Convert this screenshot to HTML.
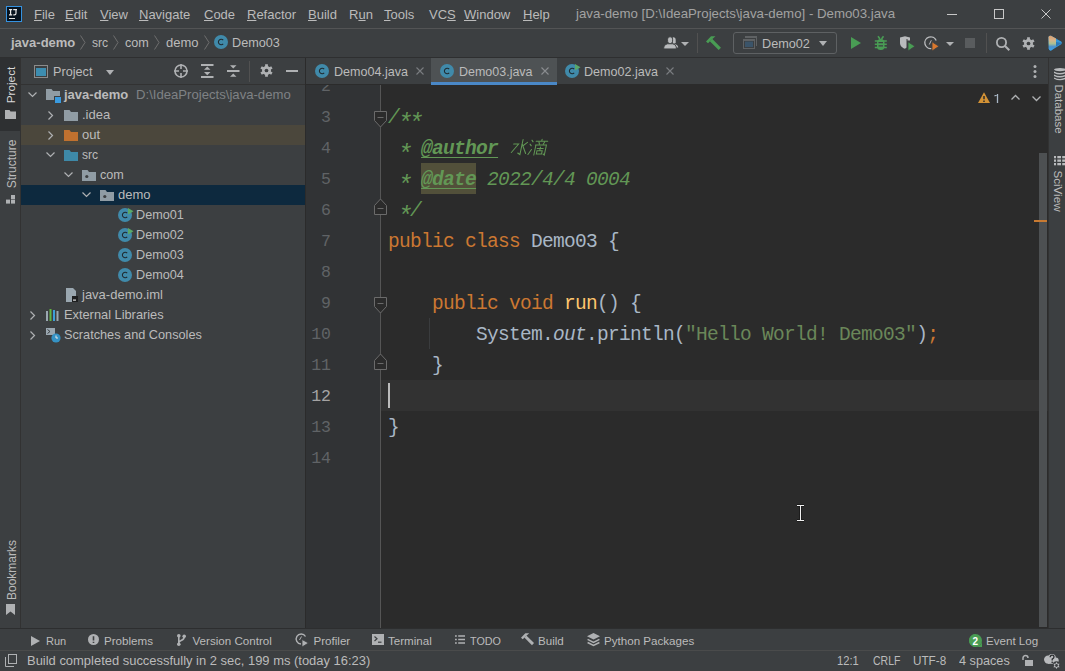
<!DOCTYPE html>
<html><head><meta charset="utf-8">
<style>
*{margin:0;padding:0;box-sizing:border-box}
html,body{width:1065px;height:671px;overflow:hidden;background:#3C3F41}
body{position:relative;font-family:"Liberation Sans",sans-serif;font-size:13px;color:#BBBBBB}
.a{position:absolute}
.t{position:absolute;white-space:nowrap}
svg{position:absolute;overflow:visible}
.code{position:absolute;left:388px;font-family:"Liberation Mono",monospace;font-size:19.5px;letter-spacing:-0.7px;white-space:pre;line-height:31px;height:31px}
.ast{display:inline-block;transform:translateY(6.5px) scale(1.3)}.kw{color:#CC7832}.df{color:#A9B7C6}.doc{color:#629755;font-style:italic}.str{color:#6A8759}.fn{color:#FFC66D}.st{color:#A9B7C6;font-style:italic}
.ln{position:absolute;font-family:"Liberation Mono",monospace;font-size:16.5px;line-height:31px;height:31px;color:#606366;text-align:right;width:60px;left:271px}
</style></head><body>
<div class="a" style="left:0px;top:0px;width:1065px;height:28px;background:#3C3F41;"></div>
<div class="a" style="left:0px;top:28px;width:1065px;height:1px;background:#535455;"></div>
<div class="a" style="left:6px;top:6px;width:16px;height:16px;background:#07131F;border:1px solid #3592E0;"></div>
<svg style="left:0px;top:0px;" width="28" height="28" viewBox="0 0 28 28"><path d="M9 9.6H12.2M10.6 9.6V14.8M9 14.8H12.2M13.2 9.6H17M16 9.6V13.3Q16 14.9 14.4 14.9H13.3" fill="none" stroke="#E8E8E8" stroke-width="1.2"/></svg>
<div class="a" style="left:9px;top:18px;width:6px;height:1px;background:#E0E0E0;"></div>
<div class="t" style="left:34px;top:4.5px;font-size:13px;line-height:20px;color:#BBBBBB;"><span style="text-decoration:underline;text-underline-offset:1px">F</span>ile</div>
<div class="t" style="left:65px;top:4.5px;font-size:13px;line-height:20px;color:#BBBBBB;"><span style="text-decoration:underline;text-underline-offset:1px">E</span>dit</div>
<div class="t" style="left:100px;top:4.5px;font-size:13px;line-height:20px;color:#BBBBBB;"><span style="text-decoration:underline;text-underline-offset:1px">V</span>iew</div>
<div class="t" style="left:139px;top:4.5px;font-size:13px;line-height:20px;color:#BBBBBB;"><span style="text-decoration:underline;text-underline-offset:1px">N</span>avigate</div>
<div class="t" style="left:204px;top:4.5px;font-size:13px;line-height:20px;color:#BBBBBB;"><span style="text-decoration:underline;text-underline-offset:1px">C</span>ode</div>
<div class="t" style="left:247px;top:4.5px;font-size:13px;line-height:20px;color:#BBBBBB;"><span style="text-decoration:underline;text-underline-offset:1px">R</span>efactor</div>
<div class="t" style="left:308px;top:4.5px;font-size:13px;line-height:20px;color:#BBBBBB;"><span style="text-decoration:underline;text-underline-offset:1px">B</span>uild</div>
<div class="t" style="left:349px;top:4.5px;font-size:13px;line-height:20px;color:#BBBBBB;">R<span style="text-decoration:underline;text-underline-offset:1px">u</span>n</div>
<div class="t" style="left:384px;top:4.5px;font-size:13px;line-height:20px;color:#BBBBBB;"><span style="text-decoration:underline;text-underline-offset:1px">T</span>ools</div>
<div class="t" style="left:429px;top:4.5px;font-size:13px;line-height:20px;color:#BBBBBB;">VC<span style="text-decoration:underline;text-underline-offset:1px">S</span></div>
<div class="t" style="left:464px;top:4.5px;font-size:13px;line-height:20px;color:#BBBBBB;"><span style="text-decoration:underline;text-underline-offset:1px">W</span>indow</div>
<div class="t" style="left:523px;top:4.5px;font-size:13px;line-height:20px;color:#BBBBBB;"><span style="text-decoration:underline;text-underline-offset:1px">H</span>elp</div>
<div class="t" style="left:576px;top:3.5px;font-size:13px;line-height:20px;color:#A2A2A2;transform:scaleX(1.02);transform-origin:0 0;">java-demo [D:\IdeaProjects\java-demo] - Demo03.java</div>
<div class="a" style="left:947px;top:14px;width:10px;height:1px;background:#C8C8C8;"></div>
<div class="a" style="left:994px;top:9px;width:10px;height:10px;background:transparent;border:1px solid #C8C8C8;"></div>
<svg style="left:1041px;top:9px;" width="10" height="10" viewBox="0 0 10 10"><path d="M0.5 0.5L9.5 9.5M9.5 0.5L0.5 9.5" stroke="#C8C8C8" stroke-width="1"/></svg>
<div class="a" style="left:0px;top:29px;width:1065px;height:28px;background:#3C3F41;"></div>
<div class="a" style="left:0px;top:57px;width:1065px;height:1px;background:#2E2F30;"></div>
<div class="t" style="left:11px;top:32.5px;font-size:13px;line-height:20px;color:#BBBBBB;font-weight:bold;">java-demo</div>
<svg style="left:80px;top:35px;" width="6" height="15" viewBox="0 0 6 15"><path d="M0.5 0.5L5 7.5L0.5 14.5" fill="none" stroke="#6E6E6E" stroke-width="1"/></svg>
<svg style="left:113px;top:35px;" width="6" height="15" viewBox="0 0 6 15"><path d="M0.5 0.5L5 7.5L0.5 14.5" fill="none" stroke="#6E6E6E" stroke-width="1"/></svg>
<svg style="left:154px;top:35px;" width="6" height="15" viewBox="0 0 6 15"><path d="M0.5 0.5L5 7.5L0.5 14.5" fill="none" stroke="#6E6E6E" stroke-width="1"/></svg>
<svg style="left:204px;top:35px;" width="6" height="15" viewBox="0 0 6 15"><path d="M0.5 0.5L5 7.5L0.5 14.5" fill="none" stroke="#6E6E6E" stroke-width="1"/></svg>
<div class="t" style="left:92px;top:32.5px;font-size:13px;line-height:20px;color:#BBBBBB;transform:scaleX(0.93);transform-origin:0 0;">src</div>
<div class="t" style="left:125px;top:32.5px;font-size:13px;line-height:20px;color:#BBBBBB;transform:scaleX(0.97);transform-origin:0 0;">com</div>
<div class="t" style="left:166px;top:32.5px;font-size:13px;line-height:20px;color:#BBBBBB;">demo</div>
<svg style="left:214px;top:35px;" width="14" height="14" viewBox="0 0 14 14"><circle cx="7" cy="7" r="7" fill="#408AAA"/><path d="M9.2 5.2A2.75 2.75 0 1 0 9.2 8.8" fill="none" stroke="#1F2A30" stroke-width="1.05"/></svg>
<div class="t" style="left:232px;top:32.5px;font-size:13px;line-height:20px;color:#BBBBBB;transform:scaleX(0.975);transform-origin:0 0;">Demo03</div>
<svg style="left:664px;top:37px;" width="16" height="13" viewBox="0 0 16 13"><g fill="#B9BBBD"><path d="M8.8 0.3Q11.6 0 11.7 3V5.2Q11.5 6.4 10.3 6.6L8.8 6.4Z"/><path d="M9.5 7.1Q13.2 7.2 14 9.6L14.2 10.4H12Z"/><g stroke="#3C3F41" stroke-width="0.9"><rect x="3.6" y="-0.2" width="5" height="6.8" rx="2.4"/><path d="M-0.2 11.9V10Q0.4 7.3 3.5 6.8H8.7Q11.8 7.3 12.3 10V11.9Z"/></g></g></svg>
<svg style="left:681px;top:42px;" width="8" height="4" viewBox="0 0 8 4"><path d="M0 0H8L4 4Z" fill="#AFB1B3"/></svg>
<div class="a" style="left:697px;top:33px;width:1px;height:20px;background:#515151;"></div>
<svg style="left:706px;top:36px;" width="15" height="14" viewBox="0 0 15 14"><path d="M0 5.5L5 0.2H9.5L5.5 3.8L2 7.2Z" fill="#499C54"/><path d="M5 4L13.8 12.8" stroke="#499C54" stroke-width="3.3"/></svg>
<div class="a" style="left:733px;top:32px;width:104px;height:22px;background:transparent;border:1px solid #5E6163;border-radius:3px;"></div>
<svg style="left:743px;top:36px;" width="14" height="14" viewBox="0 0 14 14"><rect x="2" y="0" width="12" height="2" fill="#5F6264"/><rect x="13" y="0" width="1" height="10" fill="#5F6264"/><rect x="0.5" y="3.5" width="11" height="9" fill="#3C3F41" stroke="#5F6264"/><rect x="0" y="3" width="12" height="2" fill="#5F6264"/><rect x="2" y="5.5" width="8" height="5.5" fill="#3B5469"/></svg>
<div class="t" style="left:762px;top:33.5px;font-size:13px;line-height:20px;color:#BBBBBB;transform:scaleX(0.975);transform-origin:0 0;">Demo02</div>
<svg style="left:819px;top:41px;" width="8" height="5" viewBox="0 0 8 5"><path d="M0 0H8L4 5Z" fill="#AFB1B3"/></svg>
<svg style="left:851px;top:37px;" width="10" height="12" viewBox="0 0 10 12"><path d="M0 0L10 6L0 12Z" fill="#499C54"/></svg>
<svg style="left:874px;top:36px;" width="14" height="14" viewBox="0 0 14 14"><rect x="3" y="3" width="7.5" height="11" rx="3.5" fill="#499C54"/><path d="M0.8 5H12.8M0.8 8.3H12.8M0.8 11.5H12.8M4 0.3L6 3M9.5 0.3L7.5 3" stroke="#499C54" stroke-width="1.6"/><path d="M4.5 6.6H9M4.5 9.9H9" stroke="#3C3F41" stroke-width="1.2"/></svg>
<svg style="left:900px;top:36px;" width="16" height="15" viewBox="0 0 16 15"><path d="M0 1.5L5 0.2L10 1.5V4.5H7.5V3H6.5V11.5L5 12.8C2.5 11.8 0 10 0 7Z" fill="#B9BBBD"/><path d="M8 5.8L15 10.3L8 15Z" fill="#499C54" stroke="#3C3F41" stroke-width="0.8"/></svg>
<svg style="left:924px;top:36px;" width="16" height="15" viewBox="0 0 16 15"><path d="M7.5 12.6A5.9 5.9 0 1 1 12.2 4.5" fill="none" stroke="#B9BBBD" stroke-width="1.3"/><path d="M5.3 8.5L7.3 4.3" stroke="#B9BBBD" stroke-width="1"/><path d="M8 5.8L15 10.3L8 15Z" fill="#D9782E" stroke="#3C3F41" stroke-width="0.8"/></svg>
<svg style="left:946px;top:42px;" width="8" height="4" viewBox="0 0 8 4"><path d="M0 0H8L4 4Z" fill="#AFB1B3"/></svg>
<div class="a" style="left:965px;top:38px;width:10px;height:10px;background:#595C5E;"></div>
<div class="a" style="left:986px;top:33px;width:1px;height:20px;background:#515151;"></div>
<svg style="left:996px;top:37px;" width="14" height="14" viewBox="0 0 14 14"><circle cx="5.5" cy="5.5" r="4.6" fill="none" stroke="#AFB1B3" stroke-width="1.8"/><path d="M9 9L13.3 13.3" stroke="#AFB1B3" stroke-width="2"/></svg>
<svg style="left:1022px;top:37px;" width="13" height="13" viewBox="0 0 13 13"><g transform="scale(0.9285714285714286)"><circle cx="7" cy="7" r="4.8" fill="#AFB1B3"/><path d="M7 0.3V13.7M1.2 3.65L12.8 10.35M1.2 10.35L12.8 3.65" stroke="#AFB1B3" stroke-width="3"/><circle cx="7" cy="7" r="2" fill="#3C3F41"/></g></svg>
<svg style="left:1048px;top:35px;" width="15" height="16" viewBox="0 0 15 16"><defs><linearGradient id="lg1" x1="0" y1="0" x2="0" y2="1"><stop offset="0" stop-color="#D9A070"/><stop offset="0.3" stop-color="#D8B38A"/><stop offset="0.55" stop-color="#A9C193"/><stop offset="0.75" stop-color="#4A90D0"/><stop offset="1" stop-color="#3BA4E8"/></linearGradient></defs><path d="M0.5 2Q1 0.3 3 0.8L13.2 6.6Q14.6 7.8 13.2 9.2L3.5 15.2Q1.2 15.9 0.8 13.8Z" fill="#3598D8"/><path d="M0.5 2Q1 0.3 3 0.8L8 3.6V11.5L3.5 15.2Q1.2 15.9 0.8 13.8Z" fill="url(#lg1)"/><path d="M8 7L14 8L8 11.5Z" fill="#2C78B8"/></svg>
<div class="a" style="left:0px;top:58px;width:20px;height:570px;background:#3C3F41;"></div>
<div class="a" style="left:0px;top:58px;width:20px;height:73px;background:#2E3032;"></div>
<div class="a" style="left:20px;top:58px;width:1px;height:570px;background:#323232;"></div>
<div class="t" style="left:11.8px;top:85.0px;font-size:11.8px;line-height:13.8px;color:#DADADA;transform:translate(-50%,-50%) rotate(-90deg);">Project</div>
<svg style="left:5px;top:110px;" width="11" height="9" viewBox="0 0 11 9"><path d="M0 0H4.5L5.5 1.5H11V9H0Z" fill="#AFB1B3"/></svg>
<div class="t" style="left:11.8px;top:164.3px;font-size:12px;line-height:14px;color:#BBBBBB;transform:translate(-50%,-50%) rotate(-90deg);">Structure</div>
<svg style="left:6px;top:195px;" width="10" height="9" viewBox="0 0 10 9"><rect x="5" y="0" width="4" height="4" fill="#AFB1B3"/><rect x="0" y="4.6" width="4" height="4" fill="#AFB1B3"/><rect x="5" y="4.6" width="4" height="4" fill="#AFB1B3"/></svg>
<div class="t" style="left:11.8px;top:569.5px;font-size:12px;line-height:14px;color:#BBBBBB;transform:translate(-50%,-50%) rotate(-90deg);">Bookmarks</div>
<svg style="left:6px;top:604px;" width="9" height="11" viewBox="0 0 9 11"><path d="M0 0H9V11L4.5 7.5L0 11Z" fill="#AFB1B3"/></svg>
<div class="a" style="left:21px;top:58px;width:284px;height:570px;background:#3C3F41;"></div>
<div class="a" style="left:21px;top:84px;width:284px;height:1px;background:#323232;"></div>
<div class="a" style="left:305px;top:58px;width:1px;height:570px;background:#2B2B2B;"></div>
<svg style="left:34px;top:65px;" width="14" height="13" viewBox="0 0 14 13"><rect x="0.5" y="0.5" width="13" height="12" fill="none" stroke="#8C8C8C"/><rect x="2" y="3" width="10" height="8" fill="#3D8DB0"/></svg>
<div class="t" style="left:53px;top:61.5px;font-size:13px;line-height:20px;color:#BBBBBB;transform:scaleX(0.975);transform-origin:0 0;">Project</div>
<svg style="left:106px;top:70px;" width="8" height="5" viewBox="0 0 8 5"><path d="M0 0H8L4 5Z" fill="#AFB1B3"/></svg>
<svg style="left:174px;top:64px;" width="14" height="14" viewBox="0 0 14 14"><circle cx="7" cy="7" r="6" fill="none" stroke="#AFB1B3" stroke-width="1.6"/><path d="M7 0V5M7 9V14M0 7H5M9 7H14" stroke="#AFB1B3" stroke-width="1.6"/></svg>
<svg style="left:201px;top:64px;" width="13" height="14" viewBox="0 0 13 14"><path d="M0 1H12.5M0 13H12.5" stroke="#AFB1B3" stroke-width="2"/><path d="M6.25 2.6L3 5.8H9.5Z M6.25 11.2L3 8H9.5Z" fill="#AFB1B3"/></svg>
<svg style="left:227px;top:64px;" width="13" height="14" viewBox="0 0 13 14"><path d="M0 7H12.5" stroke="#AFB1B3" stroke-width="2"/><path d="M6.25 4.5L3 1.3H9.5Z M6.25 9.5L3 12.7H9.5Z" fill="#AFB1B3"/></svg>
<div class="a" style="left:249px;top:61px;width:1px;height:21px;background:#515151;"></div>
<svg style="left:260px;top:64px;" width="13" height="13" viewBox="0 0 13 13"><g transform="scale(0.9285714285714286)"><circle cx="7" cy="7" r="4.8" fill="#AFB1B3"/><path d="M7 0.3V13.7M1.2 3.65L12.8 10.35M1.2 10.35L12.8 3.65" stroke="#AFB1B3" stroke-width="3"/><circle cx="7" cy="7" r="2" fill="#3C3F41"/></g></svg>
<div class="a" style="left:286px;top:70px;width:12px;height:2px;background:#AFB1B3;"></div>
<div class="a" style="left:21px;top:125px;width:284px;height:20px;background:#4B473C;"></div>
<div class="a" style="left:21px;top:185px;width:284px;height:20px;background:#0D293E;"></div>
<svg style="left:28px;top:92px;" width="9" height="5" viewBox="0 0 9 5"><path d="M0.5 0.5L4.5 4.5L8.5 0.5" fill="none" stroke="#AFB1B3" stroke-width="1.2"/></svg>
<svg style="left:46px;top:89px;" width="14" height="11" viewBox="0 0 14 11"><path d="M0 0H5.5L7 2H14V7H8V11H0Z" fill="#909CA4"/><rect x="9" y="8" width="6" height="6" fill="#3A9BE0"/></svg>
<div class="t" style="left:64px;top:84.5px;font-size:13px;line-height:20px;color:#BBBBBB;font-weight:bold;">java-demo</div>
<div class="t" style="left:135.5px;top:84.5px;font-size:13px;line-height:20px;color:#7F8285;transform:scaleX(1.01);transform-origin:0 0;">D:\IdeaProjects\java-demo</div>
<svg style="left:48px;top:111px;" width="5" height="9" viewBox="0 0 5 9"><path d="M0.5 0.5L4.5 4.5L0.5 8.5" fill="none" stroke="#AFB1B3" stroke-width="1.2"/></svg>
<svg style="left:64px;top:110px;" width="14" height="11" viewBox="0 0 14 11"><path d="M0 0H5.5L7 2H14V11H0Z" fill="#909CA4"/></svg>
<div class="t" style="left:82px;top:104.5px;font-size:13px;line-height:20px;color:#BBBBBB;">.idea</div>
<svg style="left:48px;top:131px;" width="5" height="9" viewBox="0 0 5 9"><path d="M0.5 0.5L4.5 4.5L0.5 8.5" fill="none" stroke="#AFB1B3" stroke-width="1.2"/></svg>
<svg style="left:64px;top:130px;" width="14" height="11" viewBox="0 0 14 11"><path d="M0 0H5.5L7 2H14V11H0Z" fill="#C0712F"/></svg>
<div class="t" style="left:82px;top:124.5px;font-size:13px;line-height:20px;color:#BBBBBB;">out</div>
<svg style="left:46px;top:152px;" width="9" height="5" viewBox="0 0 9 5"><path d="M0.5 0.5L4.5 4.5L8.5 0.5" fill="none" stroke="#AFB1B3" stroke-width="1.2"/></svg>
<svg style="left:64px;top:150px;" width="14" height="11" viewBox="0 0 14 11"><path d="M0 0H5.5L7 2H14V11H0Z" fill="#3E89A8"/></svg>
<div class="t" style="left:82px;top:144.5px;font-size:13px;line-height:20px;color:#BBBBBB;transform:scaleX(0.93);transform-origin:0 0;">src</div>
<svg style="left:64px;top:172px;" width="9" height="5" viewBox="0 0 9 5"><path d="M0.5 0.5L4.5 4.5L8.5 0.5" fill="none" stroke="#AFB1B3" stroke-width="1.2"/></svg>
<svg style="left:82px;top:170px;" width="14" height="11" viewBox="0 0 14 11"><path d="M0 0H5.5L7 2H14V11H0Z" fill="#909CA4"/><circle cx="4.8" cy="6.5" r="1.6" fill="#3C3F41"/></svg>
<div class="t" style="left:100px;top:164.5px;font-size:13px;line-height:20px;color:#BBBBBB;transform:scaleX(0.97);transform-origin:0 0;">com</div>
<svg style="left:82px;top:192px;" width="9" height="5" viewBox="0 0 9 5"><path d="M0.5 0.5L4.5 4.5L8.5 0.5" fill="none" stroke="#AFB1B3" stroke-width="1.2"/></svg>
<svg style="left:100px;top:190px;" width="14" height="11" viewBox="0 0 14 11"><path d="M0 0H5.5L7 2H14V11H0Z" fill="#909CA4"/><circle cx="4.8" cy="6.5" r="1.6" fill="#3C3F41"/></svg>
<div class="t" style="left:118px;top:184.5px;font-size:13px;line-height:20px;color:#BBBBBB;">demo</div>
<svg style="left:118px;top:208px;" width="14" height="14" viewBox="0 0 14 14"><circle cx="7" cy="7" r="7" fill="#408AAA"/><path d="M9.2 5.2A2.75 2.75 0 1 0 9.2 8.8" fill="none" stroke="#1F2A30" stroke-width="1.05"/><path d="M10 0L15.5 3.2L10 6.6Z" fill="#59A869"/></svg>
<div class="t" style="left:136px;top:204.5px;font-size:13px;line-height:20px;color:#BBBBBB;transform:scaleX(0.975);transform-origin:0 0;">Demo01</div>
<svg style="left:118px;top:228px;" width="14" height="14" viewBox="0 0 14 14"><circle cx="7" cy="7" r="7" fill="#408AAA"/><path d="M9.2 5.2A2.75 2.75 0 1 0 9.2 8.8" fill="none" stroke="#1F2A30" stroke-width="1.05"/><path d="M10 0L15.5 3.2L10 6.6Z" fill="#59A869"/></svg>
<div class="t" style="left:136px;top:224.5px;font-size:13px;line-height:20px;color:#BBBBBB;transform:scaleX(0.975);transform-origin:0 0;">Demo02</div>
<svg style="left:118px;top:248px;" width="14" height="14" viewBox="0 0 14 14"><circle cx="7" cy="7" r="7" fill="#408AAA"/><path d="M9.2 5.2A2.75 2.75 0 1 0 9.2 8.8" fill="none" stroke="#1F2A30" stroke-width="1.05"/></svg>
<div class="t" style="left:136px;top:244.5px;font-size:13px;line-height:20px;color:#BBBBBB;transform:scaleX(0.975);transform-origin:0 0;">Demo03</div>
<svg style="left:118px;top:268px;" width="14" height="14" viewBox="0 0 14 14"><circle cx="7" cy="7" r="7" fill="#408AAA"/><path d="M9.2 5.2A2.75 2.75 0 1 0 9.2 8.8" fill="none" stroke="#1F2A30" stroke-width="1.05"/></svg>
<div class="t" style="left:136px;top:264.5px;font-size:13px;line-height:20px;color:#BBBBBB;transform:scaleX(0.975);transform-origin:0 0;">Demo04</div>
<svg style="left:66px;top:288px;" width="14" height="14" viewBox="0 0 14 14"><path d="M0 0H7L10 3V14H0Z" fill="#9AA7B0"/><rect x="6" y="8" width="6" height="6" fill="#1E1F20"/><rect x="7" y="11.5" width="3" height="1.2" fill="#E0E0E0"/></svg>
<div class="t" style="left:82px;top:284.5px;font-size:13px;line-height:20px;color:#BBBBBB;">java-demo.iml</div>
<svg style="left:30px;top:311px;" width="5" height="9" viewBox="0 0 5 9"><path d="M0.5 0.5L4.5 4.5L0.5 8.5" fill="none" stroke="#AFB1B3" stroke-width="1.2"/></svg>
<svg style="left:46px;top:309px;" width="14" height="12" viewBox="0 0 14 12"><rect x="0" y="2" width="2" height="10" fill="#9AA7B0"/><rect x="3.5" y="0" width="2" height="12" fill="#62B543"/><rect x="7" y="1" width="2" height="11" fill="#3C9FD8"/><rect x="10.5" y="2" width="2" height="10" fill="#9AA7B0"/></svg>
<div class="t" style="left:64px;top:304.5px;font-size:13px;line-height:20px;color:#BBBBBB;transform:scaleX(0.985);transform-origin:0 0;">External Libraries</div>
<svg style="left:30px;top:331px;" width="5" height="9" viewBox="0 0 5 9"><path d="M0.5 0.5L4.5 4.5L0.5 8.5" fill="none" stroke="#AFB1B3" stroke-width="1.2"/></svg>
<svg style="left:46px;top:328px;" width="15" height="15" viewBox="0 0 15 15"><path d="M0 0H9V7H0Z" fill="#9AA7B0"/><path d="M1.5 1.5L4 3.5L1.5 5.5" stroke="#3C3F41" fill="none"/><circle cx="10" cy="10" r="4.6" fill="#3592C4"/><path d="M10 7.5V10H12" stroke="#E8E8E8" fill="none"/></svg>
<div class="t" style="left:64px;top:324.5px;font-size:13px;line-height:20px;color:#BBBBBB;transform:scaleX(0.978);transform-origin:0 0;">Scratches and Consoles</div>
<div class="a" style="left:306px;top:58px;width:742px;height:27px;background:#3C3F41;"></div>
<div class="a" style="left:306px;top:84px;width:742px;height:1px;background:#2B2B2B;"></div>
<div class="a" style="left:431px;top:58px;width:126px;height:26px;background:#4E5254;"></div>
<div class="a" style="left:431px;top:82px;width:126px;height:3px;background:#4A88C7;"></div>
<svg style="left:315px;top:64px;" width="14" height="14" viewBox="0 0 14 14"><circle cx="7" cy="7" r="7" fill="#408AAA"/><path d="M9.2 5.2A2.75 2.75 0 1 0 9.2 8.8" fill="none" stroke="#1F2A30" stroke-width="1.05"/></svg>
<div class="t" style="left:334px;top:61.5px;font-size:13px;line-height:20px;color:#BBBBBB;transform:scaleX(0.965);transform-origin:0 0;">Demo04.java</div>
<svg style="left:416px;top:67px;" width="8" height="8" viewBox="0 0 8 8"><path d="M0.5 0.5L7.5 7.5M7.5 0.5L0.5 7.5" stroke="#7A7D80" stroke-width="1.1"/></svg>
<svg style="left:440px;top:64px;" width="14" height="14" viewBox="0 0 14 14"><circle cx="7" cy="7" r="7" fill="#408AAA"/><path d="M9.2 5.2A2.75 2.75 0 1 0 9.2 8.8" fill="none" stroke="#1F2A30" stroke-width="1.05"/></svg>
<div class="t" style="left:459px;top:61.5px;font-size:13px;line-height:20px;color:#BBBBBB;transform:scaleX(0.96);transform-origin:0 0;">Demo03.java</div>
<svg style="left:541px;top:67px;" width="8" height="8" viewBox="0 0 8 8"><path d="M0.5 0.5L7.5 7.5M7.5 0.5L0.5 7.5" stroke="#8A8D90" stroke-width="1.1"/></svg>
<svg style="left:565px;top:64px;" width="14" height="14" viewBox="0 0 14 14"><circle cx="7" cy="7" r="7" fill="#408AAA"/><path d="M9.2 5.2A2.75 2.75 0 1 0 9.2 8.8" fill="none" stroke="#1F2A30" stroke-width="1.05"/><path d="M10 0L15.5 3.2L10 6.6Z" fill="#59A869"/></svg>
<div class="t" style="left:584px;top:61.5px;font-size:13px;line-height:20px;color:#BBBBBB;transform:scaleX(0.965);transform-origin:0 0;">Demo02.java</div>
<svg style="left:666px;top:67px;" width="8" height="8" viewBox="0 0 8 8"><path d="M0.5 0.5L7.5 7.5M7.5 0.5L0.5 7.5" stroke="#7A7D80" stroke-width="1.1"/></svg>
<svg style="left:1033px;top:65px;" width="4" height="13" viewBox="0 0 4 13"><circle cx="2" cy="1.5" r="1.5" fill="#AFB1B3"/><circle cx="2" cy="6.5" r="1.5" fill="#AFB1B3"/><circle cx="2" cy="11.5" r="1.5" fill="#AFB1B3"/></svg>
<div class="a" style="left:306px;top:85px;width:742px;height:543px;overflow:hidden">
<div class="a" style="left:-306px;top:-85px;width:1065px;height:671px">
<div class="a" style="left:306px;top:85px;width:75px;height:543px;background:#313335;"></div>
<div class="a" style="left:381px;top:85px;width:667px;height:543px;background:#2B2B2B;"></div>
<div class="a" style="left:381px;top:380px;width:667px;height:31px;background:#323232;"></div>
<div class="a" style="left:380px;top:85px;width:1px;height:543px;background:#555555;"></div>
<div class="ln" style="top:71px;color:#606366">2</div>
<div class="ln" style="top:102px;color:#606366">3</div>
<div class="ln" style="top:133px;color:#606366">4</div>
<div class="ln" style="top:164px;color:#606366">5</div>
<div class="ln" style="top:195px;color:#606366">6</div>
<div class="ln" style="top:226px;color:#606366">7</div>
<div class="ln" style="top:257px;color:#606366">8</div>
<div class="ln" style="top:288px;color:#606366">9</div>
<div class="ln" style="top:319px;color:#606366">10</div>
<div class="ln" style="top:350px;color:#606366">11</div>
<div class="ln" style="top:381px;color:#A4A3A3">12</div>
<div class="ln" style="top:412px;color:#606366">13</div>
<div class="ln" style="top:443px;color:#606366">14</div>
<div class="a" style="left:421px;top:163px;width:55px;height:31px;background:#52503A;"></div>
<div class="code" style="top:103px"><span class="doc">/<span class="ast">*</span><span class="ast">*</span></span></div>
<div class="code" style="top:134px"><span class="doc"> <span class="ast">*</span> <b style="text-decoration:underline;text-underline-offset:3px">@author</b> </span></div>
<div class="code" style="top:165px"><span class="doc"> <span class="ast">*</span> <b style="text-decoration:underline;text-underline-offset:3px">@date</b> 2022/4/4 0004</span></div>
<div class="code" style="top:196px"><span class="doc"> <span class="ast">*</span>/</span></div>
<div class="code" style="top:227px"><span class="kw">public class </span><span class="df">Demo03 {</span></div>
<div class="code" style="top:289px"><span class="kw">    public void </span><span class="fn">run</span><span class="df">() {</span></div>
<div class="code" style="top:320px"><span class="df">        System.</span><span class="st">out</span><span class="df">.println(</span><span class="str">"Hello World! Demo03"</span><span class="df">)</span><span class="kw">;</span></div>
<div class="code" style="top:351px"><span class="df">    }</span></div>
<div class="code" style="top:413px"><span class="df">}</span></div>
<svg style="left:510px;top:139px;" width="40" height="18" viewBox="0 0 40 18"><g stroke="#629755" stroke-width="1.05" fill="none" stroke-linecap="round" transform="translate(1.2 0) skewX(-12)"><path d="M12 0.5V15.5L9.5 14"/><path d="M3.5 5H8.5L3 13.5"/><path d="M17 3.3L13.5 6.5"/><path d="M12.3 5.5L17.5 14.5"/><path d="M21 1.2L22.5 2.8M20 5.2L21.5 6.8M20 15.5L22.5 10.5"/><path d="M25.5 2.3H37M31 0.3V2.3M28.5 3.3L29.3 5M34 3.3L33.2 5M25.5 6H36.5V16L35 15M26 6V16M28 9.5H34M31 8V11.5M28.3 11.8H33.5V15H28.3Z"/></g></svg>
<svg style="left:374px;top:111px;" width="13" height="16" viewBox="0 0 13 16"><path d="M0.5 0.5H12.5V9.5L6.5 16L0.5 9.5Z" fill="#2B2B2B" stroke="#6B6B6B"/><path d="M3.5 6.5H9.5" stroke="#707070" stroke-width="0.9"/></svg>
<svg style="left:374px;top:199px;" width="13" height="16" viewBox="0 0 13 16"><path d="M0.5 15.5H12.5V6.5L6.5 0L0.5 6.5Z" fill="#2B2B2B" stroke="#6B6B6B"/><path d="M3.5 9.5H9.5" stroke="#707070" stroke-width="0.9"/></svg>
<svg style="left:374px;top:297px;" width="13" height="16" viewBox="0 0 13 16"><path d="M0.5 0.5H12.5V9.5L6.5 16L0.5 9.5Z" fill="#2B2B2B" stroke="#6B6B6B"/><path d="M3.5 6.5H9.5" stroke="#707070" stroke-width="0.9"/></svg>
<svg style="left:374px;top:354px;" width="13" height="16" viewBox="0 0 13 16"><path d="M0.5 15.5H12.5V6.5L6.5 0L0.5 6.5Z" fill="#2B2B2B" stroke="#6B6B6B"/><path d="M3.5 9.5H9.5" stroke="#707070" stroke-width="0.9"/></svg>
<div class="a" style="left:429px;top:318px;width:1px;height:31px;background:#3A3C3E;"></div>
<div class="a" style="left:388px;top:383px;width:2px;height:25px;background:#BBBBBB;"></div>
<svg style="left:978px;top:92px;" width="12" height="11" viewBox="0 0 12 11"><path d="M6 0.3L12 11H0Z" fill="#D39235"/><path d="M6 4V7.3M6 8.5V10" stroke="#2B2B2B" stroke-width="1.5"/></svg>
<svg style="left:994px;top:94px;" width="5" height="9" viewBox="0 0 5 9"><path d="M3.5 0V9M3.5 0.5L0.5 2" fill="none" stroke="#A9B7C6" stroke-width="1.3"/></svg>
<svg style="left:1011px;top:95px;" width="9" height="5" viewBox="0 0 9 5"><path d="M0.5 4.5L4.5 0.5L8.5 4.5" fill="none" stroke="#AFB1B3" stroke-width="1.3"/></svg>
<svg style="left:1032px;top:96px;" width="9" height="5" viewBox="0 0 9 5"><path d="M0.5 0.5L4.5 4.5L8.5 0.5" fill="none" stroke="#AFB1B3" stroke-width="1.3"/></svg>
<div class="a" style="left:1039px;top:153px;width:8px;height:474px;background:#4D5052;"></div>
<div class="a" style="left:1034px;top:220px;width:13px;height:2px;background:#C87A32;"></div>
<svg style="left:796px;top:504px;" width="10" height="18" viewBox="0 0 10 18"><path d="M1 1.5H8M4.5 1.5V16.5M1 16.5H8" fill="none" stroke="#000" stroke-width="3" opacity="0.35"/><path d="M1 1.5H8M4.5 1.5V16.5M1 16.5H8" fill="none" stroke="#F0F0F0" stroke-width="1"/></svg>
</div></div>
<div class="a" style="left:1048px;top:58px;width:1px;height:570px;background:#323232;"></div>
<div class="a" style="left:1049px;top:58px;width:16px;height:570px;background:#3C3F41;"></div>
<svg style="left:1054px;top:68px;" width="12" height="12" viewBox="0 0 12 12"><g fill="#B9BBBD"><ellipse cx="6" cy="1.6" rx="6" ry="1.6"/><path d="M0 3.6Q6 6.6 12 3.6V5Q6 8 0 5Z"/><path d="M0 6.6Q6 9.6 12 6.6V8Q6 11 0 8Z"/><path d="M0 9.4Q6 12.4 12 9.4V10.8Q6 13.8 0 10.8Z"/></g></svg>
<div class="t" style="left:1057.5px;top:109.15px;font-size:11.5px;line-height:13.5px;color:#BBBBBB;transform:translate(-50%,-50%) rotate(90deg);">Database</div>
<svg style="left:1054px;top:156px;" width="12" height="10" viewBox="0 0 12 10"><rect x="0" y="0" width="2" height="2.3" fill="#B9BBBD"/><rect x="3.3" y="0" width="3.7" height="2.3" fill="#B9BBBD"/><rect x="8.2" y="0" width="3.8" height="2.3" fill="#B9BBBD"/><rect x="0" y="3.5" width="2" height="2.3" fill="#B9BBBD"/><rect x="3.3" y="3.5" width="3.7" height="2.3" fill="#B9BBBD"/><rect x="8.2" y="3.5" width="3.8" height="2.3" fill="#B9BBBD"/><rect x="0" y="7" width="2" height="2.3" fill="#B9BBBD"/><rect x="3.3" y="7" width="3.7" height="2.3" fill="#B9BBBD"/><rect x="8.2" y="7" width="3.8" height="2.3" fill="#B9BBBD"/></svg>
<div class="t" style="left:1057.5px;top:191.15px;font-size:11.6px;line-height:13.6px;color:#BBBBBB;transform:translate(-50%,-50%) rotate(90deg);">SciView</div>
<div class="a" style="left:0px;top:628px;width:1065px;height:1px;background:#2D2E2F;"></div>
<div class="a" style="left:0px;top:629px;width:1065px;height:21px;background:#3C3F41;"></div>
<svg style="left:31px;top:636px;" width="9" height="10" viewBox="0 0 9 10"><path d="M0 0L9 5L0 10Z" fill="#AFB1B3"/></svg>
<div class="t" style="left:46px;top:631.0px;font-size:11.6px;line-height:20px;color:#BBBBBB;transform:scaleX(0.95);transform-origin:0 0;">Run</div>
<svg style="left:88px;top:634px;" width="11" height="11" viewBox="0 0 11 11"><circle cx="5.5" cy="5.5" r="5.5" fill="#AFB1B3"/><path d="M5.5 2.2V6.5M5.5 7.8V9" stroke="#3C3F41" stroke-width="1.6"/></svg>
<div class="t" style="left:104px;top:631.0px;font-size:11.6px;line-height:20px;color:#BBBBBB;">Problems</div>
<svg style="left:177px;top:634px;" width="9" height="12" viewBox="0 0 9 12"><circle cx="1.8" cy="1.8" r="1.8" fill="#AFB1B3"/><circle cx="7.2" cy="2.3" r="1.8" fill="#AFB1B3"/><circle cx="1.8" cy="10.2" r="1.8" fill="#AFB1B3"/><path d="M1.8 2V10M7.2 3C7.2 7 2 6 2 8.5" fill="none" stroke="#AFB1B3" stroke-width="1.6"/></svg>
<div class="t" style="left:192.5px;top:631.0px;font-size:11.6px;line-height:20px;color:#BBBBBB;">Version Control</div>
<svg style="left:295px;top:633px;" width="14" height="14" viewBox="0 0 14 14"><path d="M6 11A5 5 0 1 1 10.5 3.5" fill="none" stroke="#AFB1B3" stroke-width="1.4"/><path d="M4.5 7L6.5 3.5" stroke="#AFB1B3"/><path d="M7 6.5L13.5 10L7 14Z" fill="#AFB1B3" stroke="#3C3F41" stroke-width="0.8"/></svg>
<div class="t" style="left:313.5px;top:631.0px;font-size:11.6px;line-height:20px;color:#BBBBBB;">Profiler</div>
<svg style="left:372px;top:634px;" width="12" height="11" viewBox="0 0 12 11"><rect x="0" y="0" width="12" height="11" fill="#AFB1B3"/><path d="M2.5 2.5L5 4.8L2.5 7" fill="none" stroke="#3C3F41" stroke-width="1.2"/><path d="M6 8.2H9.5" stroke="#3C3F41" stroke-width="1.2"/></svg>
<div class="t" style="left:388px;top:631.0px;font-size:11.6px;line-height:20px;color:#BBBBBB;">Terminal</div>
<svg style="left:455px;top:635px;" width="10" height="9" viewBox="0 0 10 9"><path d="M0 1H1.8M0 4.5H1.8M0 8H1.8M3.2 1H10M3.2 4.5H10M3.2 8H10" stroke="#AFB1B3" stroke-width="1.6"/></svg>
<div class="t" style="left:470px;top:631.0px;font-size:11.6px;line-height:20px;color:#BBBBBB;transform:scaleX(0.93);transform-origin:0 0;">TODO</div>
<svg style="left:521px;top:633px;" width="13" height="13" viewBox="0 0 13 13"><g transform="scale(0.87)"><path d="M0 5.5L5 0.2H9.5L5.5 3.8L2 7.2Z" fill="#AFB1B3"/><path d="M5 4L13.8 12.8" stroke="#AFB1B3" stroke-width="3.3"/></g></svg>
<div class="t" style="left:538px;top:631.0px;font-size:11.6px;line-height:20px;color:#BBBBBB;">Build</div>
<svg style="left:587px;top:633px;" width="13" height="14" viewBox="0 0 13 14"><path d="M6.5 0L13 3.3L6.5 6.6L0 3.3Z" fill="#AFB1B3"/><path d="M0.6 6.3L6.5 9.3L12.4 6.3M0.6 9.5L6.5 12.5L12.4 9.5" fill="none" stroke="#AFB1B3" stroke-width="1.5"/></svg>
<div class="t" style="left:604px;top:631.0px;font-size:11.6px;line-height:20px;color:#BBBBBB;">Python Packages</div>
<svg style="left:969px;top:634px;" width="13" height="13" viewBox="0 0 13 13"><path d="M6.5 0A6.5 6.5 0 1 0 13 6.5V13H6.5Z" fill="#499C54"/><circle cx="6.5" cy="6.5" r="6.5" fill="#499C54"/></svg>
<div class="t" style="left:972.5px;top:631.5px;font-size:10px;line-height:20px;color:#FFFFFF;font-weight:bold;">2</div>
<div class="t" style="left:986px;top:631.0px;font-size:11.6px;line-height:20px;color:#BBBBBB;">Event Log</div>
<div class="a" style="left:0px;top:650px;width:1065px;height:1px;background:#4A4B4B;"></div>
<div class="a" style="left:0px;top:651px;width:1065px;height:20px;background:#3C3F41;"></div>
<svg style="left:5px;top:654px;" width="12" height="13" viewBox="0 0 12 13"><rect x="3.5" y="0.5" width="8" height="9" fill="none" stroke="#AFB1B3"/><path d="M0.5 3V12.5H9" fill="none" stroke="#AFB1B3"/></svg>
<div class="t" style="left:26.5px;top:650.5px;font-size:13px;line-height:20px;color:#BBBBBB;transform:scaleX(0.996);transform-origin:0 0;">Build completed successfully in 2 sec, 199 ms (today 16:23)</div>
<div class="t" style="left:837px;top:650.5px;font-size:13px;line-height:20px;color:#BBBBBB;transform:scaleX(0.86);transform-origin:0 0;">12:1</div>
<div class="t" style="left:873px;top:650.5px;font-size:13px;line-height:20px;color:#BBBBBB;transform:scaleX(0.81);transform-origin:0 0;">CRLF</div>
<div class="t" style="left:912.5px;top:650.5px;font-size:13px;line-height:20px;color:#BBBBBB;transform:scaleX(0.9);transform-origin:0 0;">UTF-8</div>
<div class="t" style="left:958.5px;top:650.5px;font-size:13px;line-height:20px;color:#BBBBBB;transform:scaleX(0.975);transform-origin:0 0;">4 spaces</div>
<svg style="left:1021px;top:655px;" width="12" height="11" viewBox="0 0 12 11"><path d="M2 5V3A2.5 2.5 0 0 1 7 3" fill="none" stroke="#AFB1B3" stroke-width="1.5"/><rect x="4" y="5" width="8" height="6" fill="#AFB1B3"/></svg>
<svg style="left:1044px;top:654px;" width="17" height="15" viewBox="0 0 17 15"><g fill="#B9BBBD"><circle cx="4.2" cy="5.6" r="4.2"/><circle cx="8" cy="3.8" r="3.8"/><circle cx="11.6" cy="6.6" r="3.1"/><rect x="4" y="5" width="7.5" height="4.8"/></g><path d="M6.2 3.3Q6.2 1.2 8.1 1.2Q10 1.2 10 3Q10 4.3 8.2 5.2V6.6" fill="none" stroke="#2E3032" stroke-width="1.3"/><rect x="7.5" y="7.6" width="1.4" height="1.4" fill="#2E3032"/><circle cx="12.5" cy="11.5" r="4.3" fill="#3C3F41"/><path d="M12.5 7.9L15.6 13.3H9.4Z M12.5 15.1L9.4 9.7H15.6Z" fill="#B9BBBD"/><circle cx="12.5" cy="11.5" r="1.4" fill="#3C3F41"/></svg>
</body></html>
